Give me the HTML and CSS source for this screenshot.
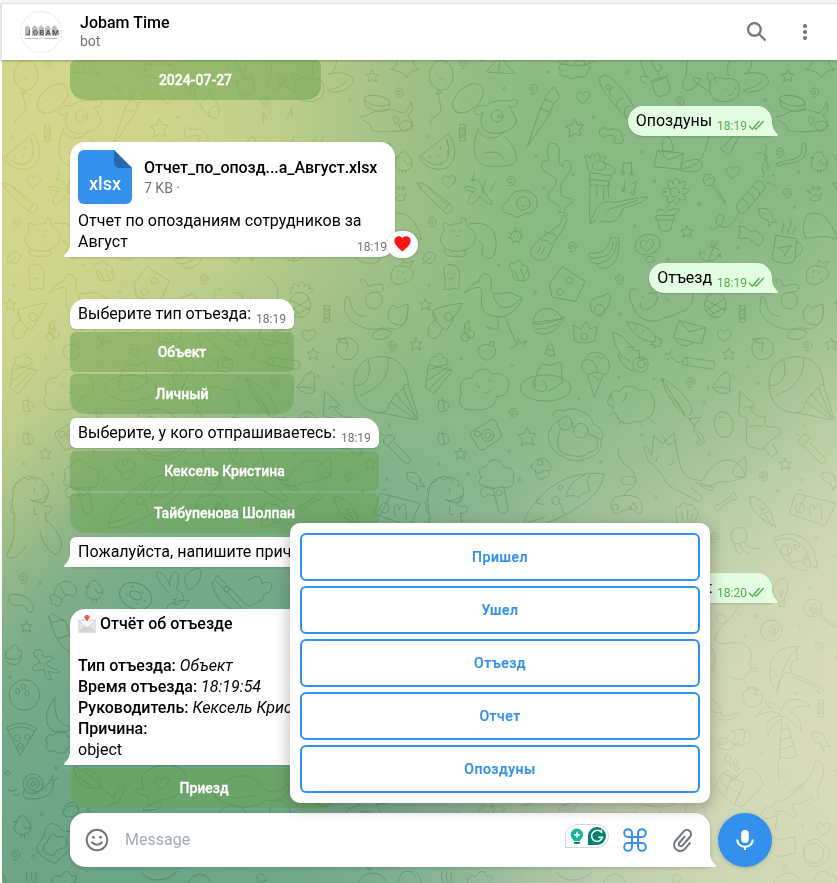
FILE: index.html
```html
<!DOCTYPE html>
<html lang="ru">
<head>
<meta charset="utf-8">
<title>Jobam Time</title>
<link rel="stylesheet" href="styles.css">
</head>
<body>
<svg class="defs" width="0" height="0" aria-hidden="true">
  <defs>
    <path id="star" d="M0-27 8-10 27-9 14 6 20 25 0 17-17 27-14 6-28-5-9-9Z"/>
    <path id="star-s" d="M0-18 5-6 18-5 9 4 13 17 0 10-12 17-9 4-18-5-5-6Z"/>
    <path id="heart" d="M-2 17C-14 8-24-2-19-12c5-9 15-7 18 1 4-9 15-11 20-3C25-3 9 10-2 17Z"/>
    <path id="swirl" d="M-2 2c-3-5 6-8 8-1 2 9-12 11-15 2-3-12 13-19 21-9 8 12-2 25-16 23"/>
    <path id="candy" d="M-8-14h16v28H-8zM-8-5 8-12M-8 5 8-4M-8 13 8 5M-6-14l-4-12 5 3 5-4 5 4 5-2-4 11M-6 14l-5 10 6-2 5 5 5-5 6 1-5-9"/>
    <path id="bone" d="M-22 10C-34 4-39 18-30 21c-1 11 14 9 12-2L20-8C30-1 38-11 29-18c1-11-14-12-14-1Z"/>
    <path id="cloud" d="M-60 62c-26-8-18-42-12-50-12-22 4-50 32-44 8-30 46-36 58-10 34-12 60 14 50 40-4 20-22 26-36 26 0 34-30 44-92 38Z"/>
    <path id="fish" d="M-24-22c22-6 40 6 40 26l14 16-15-2-8 14-4-20c-20-2-30-16-27-34ZM-12-9h1"/>
    <path id="chick" d="M-18-8c-4-24 28-28 30-6 16 4 18 40-12 42-26 2-32-24-20-34l-8-4 9-4M-6 28v8M4 28v9M2-2c0 12 12 14 18 8"/>
    <path id="pizza" d="M-48-24C-20-42 20-38 40-20L-8 60ZM-40-16C-16-32 14-26 32-12M-18-2a10 10 0 1 0 1 0M12-4a8 8 0 1 0 1 0M-8 24a8 8 0 1 0 1 0"/>
    <path id="drop" d="M-14-14C0-18 14-12 16 4 12 18 0 20-10 18-20 8-16-2-14-14ZM-4-22 2 16"/>
    <g id="tile">
      <ellipse cx="73" cy="226" rx="36" ry="45"/><path d="M58 218h1M84 216h1M66 234q8 8 14-2M65 272l-7 9 15-2ZM64 280c0 30 20 44-4 66-16 8-20 14-20 26"/>
      <path d="M208 215 250 170 293 221ZM250 170l-6 43M250 170l-60 12"/>
      <path d="M430 212c-14-16 10-24 18-18-4-22 26-20 28-6 10-16 32-8 26 8 20-6 22 14 8 20 4 14-14 20-26 12-14 12-30 8-34 0-12 4-28-4-20-16ZM424 186c20 12 80 18 108-4"/>
      <ellipse cx="153" cy="295" rx="54" ry="33" transform="rotate(-42 153 295)"/><path d="M135 300h1M155 276h1M150 310h1M175 278h1"/>
      <path d="M206 318c-24-8-40 16-32 24 12 6 22 0 24-6-20 50 14 66 42 64 30-4 58-16 58-40-2-10-18-34-22-42 28 14 30-26 14-20-14 12-52-8-84 20ZM186 385c-22 40-22 104 20 112 40 4 90 4 92-20 0-30-22-56-34-66M184 396c20 26 60 24 78-4M200 460c20-10 60-2 62 20"/><circle cx="240" cy="348" r="18"/><circle cx="246" cy="350" r="5"/>
      <path d="M332 438 370 325 400 338ZM370 325l14-26 26 10-10 29M384 299c2-26 20-22 26-40 20 26 22 40 0 50"/>
      <path d="M550 232c16-20 50 10 92 72 24 38 6 64-20 44-30-36-86-90-72-116ZM590 262c-16 6-14 22-6 30M616 294c-18 4-20 22-12 32M640 318c-18 2-20 16-16 30"/><circle cx="573" cy="262" r="7"/>
      <path d="M690 232c-26-50-22-60-4-60 14 4 20 20 46 64M694 232c-30-12-30 14-8 16M720 212c16 8 18-10 6-22M706 246l44-14 10 36c-8 20-36 30-46 12ZM700 244l52-18"/>
      <path d="M880 262c-12-26 20-36 44-24 26-8 46 4 42 30 6 34-54 50-80 24 0 0-12-16-6-30ZM880 250c-14-16-8-36-2-32 30 18 8 20 20 26M850 236c-20 50-60 40-52 10 20-30 4-50 18-80M934 226c-12-40 20-80 50-70 40 20 10 70-4 66 26-8 80-4 74 26-8 20-50 36-76 24 20-10 40-6 56-30M850 236q-36-10-14 12l40 26M926 262v6M956 262v6M934 284q10 6 14-6"/>
      <path d="M1168 208c14-4 18-22 20-36 20 12 28 8 46 0-2 20 8 30 18 38-22 0-30 10-38 24-8-18-28-22-46-26Z"/>
      <ellipse cx="1126" cy="302" rx="38" ry="15" transform="rotate(10 1126 302)"/><path d="M1088 298l4 22c40 20 60 16 70 8l2-16M1076 352c40-10 60-40 130-12 10-8 20-20 22-36 10 20 0 36-10 42 24 24 10 44-16 46-50 6-110 6-92-14l-28-20M1184 374l-12-18q8-14 12 0 8-8 8 4z"/><ellipse cx="1213" cy="378" rx="20" ry="15"/>
      <path d="M95 402c30 44 20 92-14 104-34 8-66-10-74-34ZM88 416c16 40 6 64-14 76-24 6-40-4-60-22M90 422v8M70 440v8M64 462v8M92 452v8M40 468v8M72 484v6"/>
      <path d="M548 392c2-14 22-8 24-2 30-10 46 10 44 22 8 8 2 22-12 18-14 6-16-12-8-16-8-14-26-8-30-2-12 2-22-8-18-20ZM786 366l-4-30q12 10 12 22M870 350l0-24-14 30"/>
      <path d="M740 460c-12-40 4-48 14-52 20 30 20 60-8 42M876 408c-10 40-20 90-70 96-30 8-10-24 20-24 24-8 34 10 28 24-20 20-60 8-70 4M722 452l78 8-10 48-78-8ZM722 452l32 28 46-20"/>
      <path d="M924 436l22-26M946 446l20-36M924 436c-16 0-16 16-2 18 4 14 22 10 24-8"/>
      <path d="M408 430c-30 0-10 40-14 52-30 0-30 26 10 44 40 26-20 46-10 68 14 20 44 16 34 40M408 430c40 4 0 60 30 70-4-30 30-20 24 4-10 36-32 30-30 60-10 30 20 30 32 32 14 16-26 20-22 34M440 646l-14 30c-30 20-90 60-86 84 12 30 50 20 50 12 20-32 18-50 46-80l14-32ZM422 638q20-8 30 10M380 690c10 20 30 0 40 20M362 710c10 20 30 0 40 24M370 740l-8 18M382 744l-8 18"/>
      <path d="M510 490c-14-30 0-26 10-14 0-16 12-16 14-6 14-18 16-8 14 8 20-20 22-8 10 8 20 10 44 16 36 32-20 16-40 4-50 2-24 4-36-10-34-30ZM518 520c4 50-4 110 2 152l16-10M584 528c-10 14-14 30-8 66M520 538l56 6 0 14-56-4ZM540 556v36M560 560v38M520 672c10-40 30-80 70-64l74-14 30-4-18 16-58 20c-20 50-40 40-66 38M570 630l90-28"/><ellipse cx="546" cy="497" rx="20" ry="14"/>
      <path d="M618 520v-30l26-2v34M618 524a6 5 0 1 0-1 0M644 526a6 5 0 1 0-1 0M620 572l4-30M650 580l8-36-14 8M620 575a6 6 0 1 0-1 0M648 584a6 6 0 1 0-1 0"/>
      <path d="M1044 432c16 10-10 26 8 38-16 10 14 26-4 42M1018 460c30-10 30 20 20 34-8 16 10 24 0 36M1078 492c24-16 60-6 74-30 6-30-2-34 14-30 6 50-20 56-66 60-10 6-22 12-22 0Z"/><use href="#chick" x="1208" y="484"/>
      <path d="M2 548l18 2 86 66c4 18-10 26-20 24L10 566ZM20 550l-10 16M98 610l-16 20M30 560l62 56M8 556h1"/>
      <path d="M160 540c20-10 40 20 40 34l28 38c-10 6-30-12-40-24-10 22-30 32-34 20 0-20 10-30 20-34-20 0-36-8-30-14 16-2 26 4 34 8M206 538q-12 30-8 44M172 514l-6 30M236 544l-16 32"/>
      <path d="M290 578c30-16 60 0 68 14 8 30-6 50-30 48-20 8-30 20-42 4-40-4-34-28-22-34 10-6 12-20 26-32Z"/><circle cx="319" cy="610" r="20"/><path d="M310 606h1M326 604h1M312 616q8 8 14-1"/>
      <circle cx="773" cy="577" r="14"/><path d="M760 566c-20-24 2-34 8-14 2-24 24-20 18 0 18-16 28-4 10 14 24-4 24 14 2 16 18 14 4 26-12 12 4 22-16 26-16 4-12 18-26 8-16-8-24 4-26-14-4-14-18-2-16-14 6-10ZM748 624l10-18M718 638q10-20 28 0 20-16 42-10-10 20-42 20M718 646h54v14h-54ZM722 660l6 28q16 12 34 0l6-28"/>
      <circle cx="876" cy="540" r="17"/><path d="M866 540q10-14 20 0M884 556l40 54M892 552l34 56"/>
      <path d="M1020 544c20-4 26 16 24 22l-60 72c-10 6-28-6-26-22ZM1006 560q20 4 22 24M990 578q20 4 22 24M974 598q20 4 22 24M966 636c-20 40-40 60-68 34-6-20 20-40 22-14 0 20-30 36-40 30M1050 548h10M1066 556h8M1052 528h1M1066 526h6"/>
      <path d="M1186 590c8-12 22-6 22 10-10 4-24 4-28-2ZM1172 572q8-8 8 8-8 2-8-8M1184 562q8-10 8 6-8 4-8-6M1202 562q8-8 6 8-10 4-6-8M1210 580q8-6 2 10"/>
      <use href="#fish" x="1050" y="648"/><path d="M1166 656c0-20 30-20 50-10 30 20 40 60 44 72-60-20-70 2-94-4-10-20-8-40 0-58ZM1180 650h1"/>
      <path d="M1078 706l62 10-8 68c-20 10-50 6-66-6ZM1138 726c30 2 18 48-4 44M1084 744l40-8-20 30-6-14ZM1098 700c-10-20 10-20 0-32M1116 702c-10-20 14-20 4-44M1130 704c-8-12 10-16 6-24"/>
      <path d="M966 680c20-6 30 14 32 14 20-4 30 0 42 20-6 20-14 26-20 22-6-14-16-10-26-22-20 0-22 6-32-2 8-10 8-20 4-32Z"/>
      <path d="M896 726l-22 56M888 722a10 9 0 1 0 14 4M876 738l30 10M848 756c-4 30 44 40 60 8M846 764l8-8 8 4M900 768l10-8v12"/>
      <path d="M580 714h26c0 50-4 80-40 90-20 4-30-8-24-14-20 2-30-14-16-16-20-8-10-20 0-14 40 2 50-24 54-46ZM588 724c0 30-10 50-62 50M598 724c0 40-20 60-56 68"/>
      <ellipse cx="692" cy="734" rx="38" ry="30" transform="rotate(-18 692 734)"/><use href="#heart" x="690" y="738"/><ellipse cx="699" cy="778" rx="13" ry="9"/>
      <circle cx="297" cy="709" r="16"/><path d="M280 700l-6-4M280 714h-6M290 724l-4 8M304 724l4 6M314 710h6M308 696l6-6M294 694v-8M290 708h1M302 712h1M298 700h1"/>
      <path d="M70 720c0-18 8-20 12-28-4-20-4-24 0-24 8 4 14 8 18 8 16-8 20-2 32-6 2-20 8-20 12-14 4 14 4 16 10 26 40 20 20 70-30 72-30 0-48-10-54-34ZM156 672c80-16 90 50 76 90-10 24-40 12-36-12 6-14-4-24-14-30M84 746c-8 20 20 28 36 22 30 10 30-14 22-20M104 690q6 8 10 0M126 692q8 6 12-2M118 708q8 6 14-4"/>
      <path d="M16 782c10-40 30-24 42-16-6 20-20 34-34 18M16 792l26-20"/>
      <path d="M80 806c10-20 46-18 48 20l-4 40c-8 6-14-6-20 0-6 6-14 0-24 2 12-20 0-44 0-62ZM92 820h1M108 822h1M96 836q8 6 14-2"/>
      <path d="M280 806c-10-14 8-24 14-14 4-16 24-10 20 4 20-4 26 18 12 22M284 810c4 40 20 30 40 32 20-10 10-30 6-34M292 812l14 28M312 806l10 30"/>
      <path d="M398 852 436 800l68 44-28 60-70-12ZM448 838q10-12 14-2 14 4 0 14l-10 2zM420 872q10-12 14-2 14 4 0 14l-10 2z"/>
      <path d="M186 844c0-28 36-32 38 4-10 40 10 34 36 32 20-8 30 4 56 14-10 30-40 60-76 56-50-6-48-30-46-64 4-14-4-20-6-24-20 0-30 8-46 18 14-20 26-28 44-36ZM230 886c10 50 50 46 80 10M242 952l2 38M264 952l36 84M208 980l36 10M220 990l-4-10M280 1048l20-16M300 1036l4-20 6 14 20-8-12 14"/>
      <path d="M1180 800c20-8 52 0 56 22-10 28-50 40-64 24-10-20 0-40 8-46ZM1200 800l6-20 10 10 20-8-12 18M1190 812v4M1206 818v4M1188 832v4M1210 836v4"/>
      <path d="M50 930c16-10 70-20 86-20l-46 80q-20-6-32-30ZM50 930q-10 20 8 30-30 10-24 50 30 20 42-26"/><circle cx="94" cy="950" r="12"/>
      <path d="M520 910c0-20 30-16 54-30 18 10-6 50-12 60-14 20-44 4-42-30Z"/><circle cx="548" cy="928" r="15"/>
      <path d="M348 966c2-44 60-60 88-10ZM346 970c30 10 80-10 96-20 4 10-10 22-16 16-6 16-16 6-22 14-14-4-14 14-26 4-14 8-30 0-30-8M350 992c20 20 60 8 80-18M380 944h1M396 936h1M412 944h1"/>
      <path d="M470 976l22 12 14-24 14 24 20-10-6 44c-20 8-40 8-60 2Z"/><circle cx="502" cy="1010" r="10"/>
      <path d="M660 868c-30-10-26 30-14 44 10 50 60 60 90 44 50-14 90-30 92-60 0-26 0-50-30-66M670 910c-4 30 40 20 48-6 10-20 0-30-20-24M676 890h1M712 886h1M746 892q0 16 14 8"/>
      <ellipse cx="895" cy="915" rx="32" ry="38"/><path d="M870 880c-10-10-8-20 4-14-6-20 10-20 16-6 6-24 20-16 18 0 14-16 24-8 12 8 16-6 20 6 4 12M866 900l58 30M870 930l54-34M880 944l44-20M868 916l30 36"/>
      <path d="M1030 910c-10 40 30 70 80 78 30 0 30-10 70 0 40-10 40-60 40-68M1030 910c0-30 10-26 16-2 10 34 20 40 44 40M1080 850c-10-20 10-20 20 10 20-10 40-8 44-4 6 24-10 20-20 18M1160 936c10-30 20-20 24-12l34-12c0 20 4 50-16 62-20 4-50-8-42-38ZM1112 1012q0-20 26-24 30 0 32 10-20 30-50 18Z"/><circle cx="1117" cy="902" r="25"/>
      <path d="M630 966c40 0 90 30 86 58-6 8-14 0-20 0-30-6-60-36-66-58ZM716 1010l20 8M710 1024l-10 10 12 0 2 10 8-8 8 4 0-10 6-4-12-8M660 980l-6 10M680 990l-6 10"/>
      <path d="M788 962l78 20-12 50-84-18ZM788 962l30 34 48-14M776 1020q20 30 50 10"/>
      <circle cx="1037" cy="1046" r="33"/><path d="M1008 1018c14-8 26 0 30 10-14 4-26-2-30-10ZM1036 1026q6 14-2 28"/>
      <circle cx="145" cy="1012" r="12"/><circle cx="160" cy="1003" r="12"/><path d="M142 1000q-4-30 16-38-6 16 2 28M144 970q-4 20 14 16"/>
      <path d="M186 1044c10-14 30-14 48 0 8 20-14 40-26 36-20-4-26-20-22-36ZM214 1038l6-12 10-2 0 14M204 1052h1M220 1050h1"/>
      <path d="M385 1062q10-40 16-30 8 4 12 34-14 6-28-4ZM390 1048l20 4"/>
      <path d="M36 1094l70 18-56 70-24-20ZM40 1108l54-16M34 1140l60-40M40 1164l62-60M40 1090c-4-20 10-24 14-16 8-24 26-10 22 0 16-4 22 10 10 14"/>
      <use href="#cloud" x="206" y="1166"/><path d="M180 1150q-4 10 8 12M216 1140q4 10 10 2M200 1176q12 8 20-4"/>
      <ellipse cx="386" cy="1164" rx="76" ry="39"/><path d="M356 1160c-6-30 6-46 14-58 2-20 20-4 24-6 20 2 34-20 40 0-4 20 6 40 0 50M350 1140c-8 24 10 36 26 34 20-4 14-20 0-34M390 1174q30-10 50-30"/>
      <path d="M512 1124l20 68 26-68M512 1124c-20-10-24-34-8-44 14-40 60-20 70 2 10 30-6 50-24 36-14 4-20-6-38 6ZM504 1080c20-6 40 14 36 36M540 1064q10 20 20 8M520 1120l24 20"/>
      <path d="M588 998c20 0 50 30 64 54l16 0-2 24 24 2M588 998c0 30 14 50 20 60l-4 10c10 20 20 40 48 46M630 1042l20-2M610 1066l30 18"/><circle cx="671" cy="1094" r="23"/><circle cx="673" cy="1092" r="12"/>
      <path d="M806 1072l86 12q4 20-6 24l-88-14q-4-14 8-22ZM808 1074q10 12 2 20M796 1084c-16 10-26-6-34-14M744 1062l14 0M748 1080l8-6M760 1058l2-10"/>
      <path d="M886 1160c20-10 20-50 50-40 10 20-6 40 6 50-10 20-50 8-56-10ZM890 1164q30-10 50 8M948 1124l4 10M874 1160l0 12M920 1120l8-8"/>
      <path d="M606 1174c14-20 46-20 60-2 20-10 44 10 40 20 14 16 4 60-14 60-10 20-40 10-48 16-20 10-46-10-44-24-20-4-10-20-12-24-20-4-20-20-8-32 0-16 16-20 26-14ZM628 1180q0 20-14 26M584 1184q-6 8 2 16M584 1240l-8 8M610 1264l-6 12M672 1270l6 8M690 1250l22 20M586 1202h1M604 1198h1"/>
      <path d="M734 1136c50 20 100 80 88 104-4 8-10 12-20 6-30-30-60-70-68-110ZM734 1136l70 108M760 1190q30 20 40 50M816 1256l36-4-20 24ZM818 1258l20 30c30 30 30 40 10 46-16 0-10-14-4-10 10 4 8-8-16-36"/>
      <ellipse cx="920" cy="1274" rx="28" ry="39" transform="rotate(-10 920 1274)"/><path d="M906 1252h14"/>
      <path d="M970 1174l44 40c-6 8-16 0-14 16 20 16 24 24 46 20-6 20 0 24 0 30 24 0 44 0 48 18-20 20-40 20-56 50-20 0-46-10-50-20l2-74c-20-4-20-10-24-10ZM1042 1344l20 26 20-10-16-30M980 1226q14-14 32 0M1000 1280q20-8 36 0"/>
      <path d="M1138 1238c-50 0-80-30-82-84 0-60 40-84 82-84 50 0 80 34 82 84M1138 1238c30 0 20-40 30-32 8-24 14-12 14-24 20-4 10-20 24-14 0-20 10-10 14-16M1100 1080c10 40 0 80-44 76M1160 1072c0 60-20 90-84 114M1138 1238l106 22M1168 1206l76 54M1182 1182l64 74M1206 1168l40 90M1220 1154l30 100"/>
      <use href="#drop" x="80" y="1216"/><use href="#drop" x="80" y="1315"/>
      <path d="M162 1296l60-36q10-6 14 4l18 40q0 10-8 14l-44 30q-12 6-18-4l-22-36q-4-8 0-12Z"/><circle cx="212" cy="1306" r="18"/><circle cx="212" cy="1306" r="9"/><circle cx="181" cy="1302" r="9"/>
      <path d="M410 1250c-8-24 20-20 34-18 10-14 80 0 84 40 40 20 30 40 24 50 8 40-40 60-80 60-50-8-80-44-78-76 4-20 16-36 30-44M430 1290c-20 50 0 70 20 74 40 10 60 4 66-10 30 10 30-40 20-46"/><circle cx="445" cy="1270" r="20"/><circle cx="491" cy="1292" r="22"/><path d="M512 1300l40 18M464 1276l6 8M484 1294h1M440 1272h1"/>
      <path d="M604 1348c-4 50 50 50 50 84 8 24-36 30-42 10 8-20 44-14 46-4 4 30-40 30-36 50M594 1492c30-10 50-6 66 0 20 10 20 50 6 50-14-8-14-14-26-14-16 2-26 4-36 14-20 0-34-30-10-50Z"/><circle cx="595" cy="1522" r="9"/><circle cx="650" cy="1512" r="4"/><circle cx="640" cy="1522" r="4"/><circle cx="658" cy="1524" r="4"/>
      <path d="M694 1384c-10-30-18-50-8-48 10 6 10 20 18 30l6-60 26 26 34-34 10 60c10 40 10 80 76 84 40-80 110-80 130-14-20 14-60 20-80 18-30 20-50 10-70 0M694 1384c40 20 50 80 90 88l64 34c10-4 10-14 4-18l-30-26M740 1310q4 20 14 26l26-18M726 1364q-10 14-8 20M772 1382q-6 14-16 14M850 1450l40 14c-4 16-20 4-40-8M986 1428c-30 10-44-4-36-20 10-24 30-30 34-38 6 30 4 40 2 58Z"/>
      <path d="M342 1402c6-30 50-40 60-2 0 16-16 14-22 10-20 20-24 8-38-8ZM356 1410c-4 20 10 34 26 24 20-6 14-20 10-24"/><circle cx="370" cy="1388" r="8"/>
      <path d="M192 1432c-10-14-4-34 14-30 10-30 44-30 54 0 20-4 38 16 28 30 8 20-10 40-30 28-30 8-40 4-52-2-24 0-24-10-14-26ZM228 1466l18 70c10 8 20 4 28-6l-14-70M230 1470c-20-16-50-4-36 10-4 10 10 18 18 2l20 6"/><circle cx="246" cy="1478" r="9"/>
      <path d="M40 1560c-6-40-14-60 0-100 10-30 50-40 80-20 30 24 24 50 0 70 0 10 14 10 26 8 14 10-10 30-16 20l4 30M36 1480c-10-10-4-20 4-20 0-16 10-16 16-14 4-18 20-14 22-6 14-10 20-4 26 4M32 1500c-12 0-8 20 0 20-10 4-4 20 2 20M86 1500q20 10 50-14l-6 20q-20 8-44-6ZM98 1466v10M124 1452v8M98 1520v24h10M34 1556c10 40 0 80-20 110 10 20 40 4 60-30M135 1560c40 40 60 80 30 104-20 0-50-50-50-70"/>
      <path d="M560 1422c-80-10-150 20-200 80-30 30-40 60-40 80l36 0 70-28c80-40 130-80 134-132ZM520 1424c-20 24 0 30-4 50-20 10-24 4-30 20-16-10-20-8-40-4 8-26 20-50 60-66M360 1500l0 10 20 4M440 1540l-10-30M326 1570l60-20"/><circle cx="416" cy="1502" r="12"/><circle cx="430" cy="1462" r="7"/>
      <path d="M780 1556c-10-40 0-40 8-34 6-20 20-14 22-6 20-8 24 4 22 12 20 4 8 20 0 40-20 0-30 14-50 10ZM794 1536l4 26M812 1530v30M828 1540l-8 24"/>
      <path d="M998 1490c20-6 60 30 66 54M998 1490c0 30 20 60 44 70M1030 1544l30-10 16 50M1042 1560l34 20M1046 1546l20 34M1038 1560l16 14"/><circle cx="1036" cy="1528" r="5"/>
      <path d="M1136 1480l120 30-32 68-106-36ZM1166 1486l-30 60M1180 1550c-10-40 14-50 12-20 20-40 20-10 22 30M1140 1514q-12 14 2 24 20 4 20-20-10-16-22-4M1142 1470h10"/>
      <path d="M1144 1320l16-16q14 0 20 10l-24 26q-12-8-12-20ZM1180 1330l48 48c-4 14-14 14-22 8l-46-48M1136 1300l10 6M1162 1270v10"/><use href="#fish" x="1240" y="1440"/>
      <path d="M944 1620c-6-30 8-40 20-36 20-10 30 20 24 36-10 10-30 20-44 0ZM950 1630c10 14 0 26 20 30M966 1630c10 14 10 26 30 30M980 1624c10 14 20 24 50 22"/>
      <path d="M1070 1616c70-40 130 10 130 90l-20-10c-10 30-50 10-60 0-20-20-34-40-50-80ZM1080 1620c60-20 96 30 100 76M1110 1640l10 50 30-8 20 20M1130 1634l6 14 12-10ZM1160 1672l2 16 10-12Z"/><circle cx="1108" cy="1650" r="16"/>
      <path d="M24 1786c20-8 66 0 72 40-4 20-24 8-20 0-14-16-26-10-32-10-14 6-30-16-20-30Z"/><path d="M150 1800c-12-10 0-20 8-14-4-20 20-50 44-40 30 10 24 40 10 46-10-16-26-4-30 4 0 20-20 30-22 16-10 4-14-2-10-12ZM160 1786l20 12M176 1760l14 24"/>
      <use href="#chick" x="280" y="1770"/><ellipse cx="402" cy="1788" rx="50" ry="38" transform="rotate(25 402 1788)"/><ellipse cx="402" cy="1786" rx="20" ry="12" transform="rotate(25 402 1786)"/><path d="M372 1780l6 6M390 1760h6M420 1776l6 4M402 1812l8-2M430 1800v6"/>
      <path d="M500 1780c-30-40-44-60-30-66 20 10 34 34 34 46 0-40 16-50 24-40 10 20-6 40-2 50 40 20 10 50-8 44l4-20M508 1788h1M526 1782h1M512 1798q10 4 12-4M500 1840c-10-20 0-30 14-30 20-10 34-10 48-8-14 20-20 20-20 40M560 1770c-30-50 10-60 30-66 20 20 0 50-26 66Z"/>
      <path d="M632 1750l14-24 80 82 20 12 30-20M632 1750c0 20 30 80 76 80M644 1744l80 84M740 1740c30-20 40-8 40 10 30-10 40 10 20 28-20 0-10 20-24 30M706 1730h1"/><circle cx="674" cy="1768" r="8"/>
      <path d="M142 1850l10-10 40 26c14 40 30 90 10 90-30-20-50-60-60-106ZM146 1868l40-10M170 1916l40-14M142 1850l6 16"/>
      <path d="M12 1966c0-20 12-14 16-22 4-16 24-6 20 6 20 0 10 14 10 18 0 30-20 30-40 20-8-10-8-10-6-22ZM12 1972q24 14 46-2"/>
      <path d="M100 1970c-16-20 20-32 24-8 2 20 30-2 30 10-4 16-16 10-20 16 4 20 44 20 40 28-20 8-30-6-34-2 6 20 14 20 10 24-20 4-20-20-24-30-14 0-20 10-34 0-2-14 16-16 20-18 0-14 0-8-12-20ZM106 1966h1M118 1966h1M118 1990h1M126 1996h1"/>
      <circle cx="68" cy="2085" r="46"/><ellipse cx="48" cy="2074" rx="6" ry="9"/><ellipse cx="66" cy="2060" rx="6" ry="8"/><ellipse cx="76" cy="2080" rx="6" ry="9"/>
      <path d="M160 2092c-40 50-30 100 10 106 20 0 40-10 46-20-50 8-60-40-56-86ZM170 2130h1M180 2160h1"/><use href="#pizza" x="64" y="2206"/>
      <path d="M136 2230c-10-20 10-30 20-24 10-20 40-16 40 4 20 0 20 30 0 34 0 20-30 20-34 8-20 8-34-4-26-22Z"/>
      <circle cx="94" cy="2352" r="30"/><circle cx="94" cy="2352" r="18"/><circle cx="94" cy="2352" r="7"/><path d="M68 2370c-10 20 0 24 10 26 40 4 80-10 76-44 8-20-10-16-10-6-20 20-30 30-50 30M150 2340l4-16M160 2342l8-10M20 2370q14 8 26-2M36 2384q10 6 20-2"/>
      <path d="M220 2320c-10-24 4-24 14-8 30-20 70 20 60 50-40 10-64-8-74-42ZM296 2360l40 34M336 2394c10-30 30-50 34-30-10 30-24 50-30 44M320 2416l30-10M230 2330l40 30M250 2316l40 30"/>
      <path d="M420 2330c30-40 100-50 130-10 10 40-20 80-80 80l-30 20 0-30c-20-10-50-10-38-20l24-4q-10-20-6-36Z"/><use href="#heart" x="480" y="2350"/><path d="M640 2390c20-80 120-80 150-20 30 10 60 0 66-20 20 30-30 60-60 50-50 30-100 30-156-10ZM660 2380c40 30 80 0 100 10"/>
      <path d="M882 1732c10-20 30-10 24-4M880 1936c20 30 16 60 2 80M1076 1750c10-24 30-16 36 0 4 20-10 30-10 50l-20 6c-10-20-20-40-6-56ZM1084 1806l4 14 14-2 0-16M1088 1770l4 24 10-26"/>
      <circle cx="1188" cy="1824" r="27"/><use href="#swirl" x="1188" y="1824"/><path d="M1210 1844l50 34M1206 1850l50 34"/>
      <circle cx="1063" cy="1892" r="32"/><circle cx="1071" cy="1890" r="15"/><circle cx="1071" cy="1887" r="4"/><circle cx="1071" cy="1896" r="5"/>
      <path d="M960 1820c-4 20-20 40-40 50-24 4-34-30-4-26 20 10 12 24-6 40-20 30-24 50 20 46 60-10 80 20 70 50-10 40 30 40 22 30-10-20-30 10-40 24-10 8-36 4-48-8"/>
      <path d="M1144 1940c-50-4-90 30-84 70 10 0 20 10 20 20M1144 1940c-6 10-10 30 0 40-20-4-30 20-20 40-20-10-40 10-42 54-20-20-28-44-22-64M1144 1940c-40 40-50 80-62 134M1124 2028l80 36c10 4 0 14-10 8M1126 2020l84 38c20 10 0 34-10 16"/>
      <circle cx="1007" cy="2092" r="30"/><path d="M986 2072l12-2-8-10 12 6 6-8 2 12 14-2-10 8 8 10-18-6"/>
      <path d="M1094 2150c-10-20-50-20-76 0 20-30 30-30 50-24-20-10-30-20-24-20 20-4 40 14 50 28 0-50 70-40 86-14-30-6-50 0-60 16 30 10 30 30 32 56-20-20-30-30-50-44-20 20-40 24-48 56-20-30 10-60 40-54ZM1094 2158l-6 110q20 16 50 0l-28-100M1092 2190l24-8M1090 2220l34-10M1088 2250l44-14M1090 2270l-8 24M1084 2300l2 40"/>
      <path d="M904 2230c0-20 20-20 24-10 10-30 50-44 70-20 10 20-4 34-16 32-10 10-30 4-40-6 10 20 30 4 20 0M904 2230q10 10 26-4c20-10 20 10 30 6-20 24-60 20-56-2ZM940 2190q20 8 14 30M976 2184q14 14 2 40"/>
      <use href="#fish" x="1210" y="2220"/><path d="M880 2130c30 20 40-4 30 10 4 24 60-10 56-2-8 24-40 24-60 20M876 2090c20 20 30 20 34 40"/>
      <path d="M916 2320l-24 40 60 54 30-64ZM982 2350l-30 64 22 8 64-66c-4-30-30-60-50-50l-50 40M940 2340l-14 40M916 2352l54 28"/><circle cx="932" cy="2320" r="8"/><circle cx="950" cy="2332" r="8"/><circle cx="944" cy="2294" r="7"/><circle cx="960" cy="2306" r="7"/><ellipse cx="932" cy="2276" rx="8" ry="12"/><ellipse cx="956" cy="2286" rx="7" ry="8"/>
      <path d="M1032 2446c0-20 20-24 40-30 0-20 10-20 20-8 40-30 90-60 104-124 20-6 30 20 20 50-10 20-20 40-10 50-4 30-20 20-22 4-30 30-40 20-60 26 10 20 20 30 10 40-20-4-20-20-40-20-20 20-54 30-62 12ZM1074 2436l16-4M1070 2424h1M1140 2360l20-8M1120 2376l40-20"/>
      <path d="M1046 2500l44 20 44-10v50l-50 10-40-20M1080 2450c0 20-10 30 0 44"/><circle cx="1190" cy="2560" r="30"/><path d="M1160 2570c-10-50 40-70 60-34 30 10 20 50-6 54-20 20-50 10-54-20Z"/>
      <use href="#chick" x="64" y="2476"/><path d="M106 2540c10-20 24-30 24-50 10-30 40-20 50 0 20 10 60-4 56 30l-76 70c-20-4-60-30-54-50ZM126 2536c20-10 10-30 30-34 20 20 40-4 38 20 10 30-40 20-36 44-20 0-40-10-32-30Z"/><ellipse cx="208" cy="2434" rx="24" ry="16" transform="rotate(-20 208 2434)"/><path d="M200 2430h1M214 2436h1M220 2424h1"/><path d="M424 2430c10-20 20-10 40-26 20 0 20 20 0 24ZM652 2440c20-40 70-30 80 0M806 2440c-10-60 60-40 60 0M180 2430c20-30 50-30 50-6"/>
      <path d="M76 2616c-6 20 0 30 12 34M90 2616c-6 20 0 30 12 34M104 2618c-6 20 0 30 12 34M150 2640c10-24 20-10 26-10 10-20 30-20 34 0 10-8 20 0 10 14-30 16-70 14-70-4ZM420 2618c20 30 76 30 106-4M560 2652c10-40 60-40 66 0M584 2630h1M602 2630h1M764 2630c10-20 30 0 30 10l-20 8ZM1070 2650c10-40 70-40 80-8M1190 2650c0-50 50-40 50-20M0 2620q20 20 8 40"/>
      <use href="#swirl" x="137" y="190"/><use href="#swirl" x="346" y="264"/><use href="#swirl" x="786" y="301"/><use href="#swirl" x="1190" y="275"/><use href="#swirl" x="280" y="540"/><use href="#swirl" x="1108" y="577"/><use href="#swirl" x="463" y="738"/><use href="#swirl" x="605" y="835"/><use href="#swirl" x="1086" y="455"/><use href="#swirl" x="43" y="663"/><use href="#swirl" x="1170" y="1035"/><use href="#swirl" x="817" y="1145"/><use href="#swirl" x="286" y="1236"/><use href="#swirl" x="1037" y="1426"/><use href="#swirl" x="890" y="1610"/><use href="#swirl" x="62" y="1732"/><use href="#swirl" x="1205" y="1937"/><use href="#swirl" x="40" y="2562"/>
      <use href="#star" x="473" y="384"/><use href="#star-s" x="1112" y="228"/><use href="#star-s" x="810" y="695"/><use href="#star" x="330" y="1310"/><use href="#star-s" x="25" y="914"/><use href="#star-s" x="935" y="1062"/><use href="#star-s" x="1243" y="1032"/><use href="#star-s" x="131" y="1361"/><use href="#star-s" x="1105" y="1392"/><use href="#star-s" x="74" y="1880"/>
      <use href="#heart" x="498" y="294"/><use href="#heart" x="96" y="546"/><use href="#heart" x="948" y="518"/><use href="#heart" x="922" y="1008"/><use href="#heart" x="1220" y="2488"/>
      <use href="#candy" x="137" y="398"/><use href="#candy" x="976" y="942"/><use href="#candy" x="1212" y="2126"/><use href="#bone" x="927" y="1505"/>
      <path d="M262 262a4 4 0 1 0 1 0M391 212a4 4 0 1 0 1 0M630 214a4 4 0 1 0 1 0M1044 296a4 4 0 1 0 1 0M30 406a4 4 0 1 0 1 0M356 466a4 4 0 1 0 1 0M528 348a4 4 0 1 0 1 0M468 520a4 4 0 1 0 1 0M674 452a4 4 0 1 0 1 0M712 540a4 4 0 1 0 1 0M380 558a4 4 0 1 0 1 0M846 608a4 4 0 1 0 1 0M652 674a4 4 0 1 0 1 0M752 774a4 4 0 1 0 1 0M964 740a4 4 0 1 0 1 0M1144 512a4 4 0 1 0 1 0M1132 618a4 4 0 1 0 1 0M244 792a4 4 0 1 0 1 0M36 852a4 4 0 1 0 1 0M354 874a4 4 0 1 0 1 0M610 938a4 4 0 1 0 1 0M132 1072a4 4 0 1 0 1 0M284 1092a4 4 0 1 0 1 0M606 1128a4 4 0 1 0 1 0M710 1132a4 4 0 1 0 1 0M486 1192a4 4 0 1 0 1 0M862 1204a4 4 0 1 0 1 0M994 1096a4 4 0 1 0 1 0M1022 1146a4 4 0 1 0 1 0M674 1302a4 4 0 1 0 1 0M276 1350a4 4 0 1 0 1 0M552 1382a4 4 0 1 0 1 0M66 1388a4 4 0 1 0 1 0M152 1418a4 4 0 1 0 1 0M310 1434a6 6 0 1 0 1 0M876 1358a5 5 0 1 0 1 0M716 1486a5 5 0 1 0 1 0M1082 1468a4 4 0 1 0 1 0M1154 1434a4 4 0 1 0 1 0M1200 1608a4 4 0 1 0 1 0M114 1744a5 5 0 1 0 1 0M1178 1758a4 4 0 1 0 1 0M1014 1844a4 4 0 1 0 1 0M1146 1876a4 4 0 1 0 1 0M984 1904a4 4 0 1 0 1 0M1138 2076a4 4 0 1 0 1 0M1036 2254a4 4 0 1 0 1 0M162 2300a5 5 0 1 0 1 0M18 2312a7 7 0 1 0 1 0M120 2438a5 5 0 1 0 1 0M260 2424a5 5 0 1 0 1 0M94 2564a5 5 0 1 0 1 0M1102 2594a7 7 0 1 0 1 0M1156 2474a4 4 0 1 0 1 0M24 2026a4 4 0 1 0 1 0"/>
    </g>
    <symbol id="tail" viewBox="0 0 9 18"><path d="M6 17H0V0c.193 2.84.876 5.767 2.05 8.782.904 2.325 2.446 4.485 4.625 6.48A1 1 0 0 1 6 17z"/></symbol>
    <symbol id="checks" viewBox="0 0 17 11"><path d="M.8 5.600 4.300 9.200 11.500 1M8 9.200 15.800 1M6.800 8l1.200 1.200" fill="none" stroke="currentColor" stroke-width="1.300"/></symbol>
  </defs>
</svg>

<div class="app">
  <header class="header">
    <svg class="avatar" viewBox="0 0 42 42">
      <circle cx="21" cy="21" r="20.5" fill="#fff" stroke="#b9dafa" stroke-width=".8" stroke-dasharray="2.2 1.6"/>
      <g fill="#bdbdbf"><path d="M5 25v-8q2.500-5 5 0v8zM12 25v-8q2.500-5 5.500 0v8zM18.500 25v-8q2.700-5 5.500 0v8zM25 25v-8q2.700-5 5.500 0v8zM31.800 25v-8q2.700-5 5.300 0v8z"/></g>
      <g class="avatar-text"><text x="6" y="24">J</text><text x="12.700" y="24">O</text><text x="19.200" y="24">B</text><text x="25.600" y="24">A</text><text x="32" y="24">M</text></g>
      <path d="M5 27.500h13M24 27.500h13" stroke="#aaa" stroke-width=".8"/><path d="M19 27h4" stroke="#ccc" stroke-width="1"/>
    </svg>
    <div class="peer"><div class="peer-name">Jobam Time</div><div class="peer-status">bot</div></div>
    <svg class="search" viewBox="0 0 24 24"><circle cx="9.400" cy="9.400" r="6.300"/><path d="m14 14 6.500 6.500"/></svg>
    <svg class="more" viewBox="0 0 24 24"><circle cx="12" cy="6" r="2.100"/><circle cx="12" cy="12" r="2.100"/><circle cx="12" cy="18" r="2.100"/></svg>
  </header>

  <main class="chat">
    <canvas class="gradient" width="50" height="50"></canvas>
    <svg class="pattern" width="835" height="823" viewBox="2 60 835 823">
      <g transform="translate(1.700 0) scale(.33333)"><use href="#tile"/></g>
      <g transform="translate(417 0) scale(.33333)"><use href="#tile"/></g>
      <g transform="translate(832.300 0) scale(.33333)"><use href="#tile"/></g>
    </svg>

    <div class="messages">
      <div class="keyboard w-date"><div class="key last">2024-07-27</div></div>
      <div class="bubble out">Опоздуны<span class="time">18:19<svg class="checks"><use href="#checks"/></svg></span><svg class="tail"><use href="#tail"/></svg></div>
      <div class="bubble in doc">
        <div class="file">
          <svg class="file-icon" viewBox="0 0 54 54"><path d="M6 0h30l18 18v30a6 6 0 0 1-6 6H6a6 6 0 0 1-6-6V6a6 6 0 0 1 6-6z" fill="#3390ec"/><path d="M36 0l18 18H41a5 5 0 0 1-5-5z" fill="#2468ad"/><text x="27" y="40" text-anchor="middle">xlsx</text></svg>
          <div class="file-info"><div class="file-name">Отчет_по_опозд...а_Август.xlsx</div><div class="file-size">7 KB ·</div></div>
        </div>
        <div class="caption">Отчет по опозданиям сотрудников за Август</div>
        <span class="time corner">18:19</span>
        <span class="reaction"><svg viewBox="0 0 20 20"><path d="M10 18.500C5 14 1 10.500 1.500 6.500 2 2 7.500 1 10 4.500c2.500-3.500 8-2.500 8.500 2C19 10.500 15 14 10 18.500Z" fill="#fb1413"/></svg></span>
        <svg class="tail"><use href="#tail"/></svg>
      </div>
      <div class="bubble out">Отъезд<span class="time">18:19<svg class="checks"><use href="#checks"/></svg></span><svg class="tail"><use href="#tail"/></svg></div>
      <div class="bubble in first w-type">Выберите тип отъезда:<span class="time">18:19</span></div>
      <div class="keyboard w-type"><div class="key">Объект</div><div class="key last">Личный</div></div>
      <div class="bubble in mid w-who">Выберите, у кого отпрашиваетесь:<span class="time">18:19</span></div>
      <div class="keyboard w-who"><div class="key">Кексель Кристина</div><div class="key last">Тайбупенова Шолпан</div></div>
      <div class="bubble in end w-reason">Пожалуйста, напишите причину:<span class="time">18:19</span><svg class="tail"><use href="#tail"/></svg></div>
      <div class="bubble out">object<span class="time">18:20<svg class="checks"><use href="#checks"/></svg></span><svg class="tail"><use href="#tail"/></svg></div>
      <div class="bubble in report w-report">
        <div><svg class="emoji" viewBox="0 0 18 18"><path d="M0 5h18v12.500H0z" fill="#e4e4e4"/><path d="M0 17.500 7 10h4l7 7.500z" fill="#d3d3d3"/><path d="M0 5h18l-8 7.500q-1 .8-2 0z" fill="#f3f3f3" stroke="#bbb" stroke-width=".5"/><path d="M7.500 0h3v1.500h1.800L9 6.500 5.700 1.500h1.800z" fill="#f0514a"/></svg><b>Отчёт об отъезде</b></div>
        <div>&nbsp;</div>
        <div><b>Тип отъезда:</b> <i>Объект</i></div>
        <div><b>Время отъезда:</b> <i>18:19:54</i></div>
        <div><b>Руководитель:</b> <i>Кексель Кристина</i></div>
        <div><b>Причина:</b></div>
        <div>object</div>
        <svg class="tail"><use href="#tail"/></svg>
      </div>
      <div class="keyboard w-report"><div class="key last">Приезд</div></div>
    </div>

    <div class="composer">
      <div class="input">
        <svg class="icon smile" viewBox="0 0 24 24"><circle cx="12" cy="12" r="9.500"/><path d="M6.900 13.800q5.100 5 10.200 0"/><circle class="dot" cx="8.700" cy="9.500" r="1.300"/><circle class="dot" cx="15.300" cy="9.500" r="1.300"/></svg>
        <span class="placeholder">Message</span>
        <svg class="assist" viewBox="0 0 44 24">
          <path d="M.5 23.500V12A11.500 11.500 0 0 1 12 .5h20a11.500 11.500 0 0 1 0 23z" fill="#fff" stroke="#d5d6e3"/>
          <path d="M8.700 17c0-1.600-3-3-3-6.200a6.200 6.200 0 0 1 12.400 0c0 3.200-3 4.600-3 6.200z" fill="#13b89a"/><path d="M9 18h6v1.300q-3 1.500-6 0z" fill="#02735f"/><path d="m12 7 1.100 2.700 2.700 1.100-2.700 1.100L12 14.600l-1.100-2.700-2.700-1.100 2.700-1.100z" fill="#fff"/>
          <path d="M23 21v-9a9 9 0 1 1 9 9z" fill="#02806d"/><path d="M36 8a5.500 5.500 0 1 0 1.400 5.300h-4M36.500 5.500V9" fill="none" stroke="#fff" stroke-width="1.500"/>
        </svg>
        <svg class="icon command" viewBox="0 0 24 24"><path d="M9.200 5.600a3.600 3.600 0 1 0-3.600 3.600h12.800A3.600 3.600 0 1 0 14.800 5.600v12.800a3.600 3.600 0 1 0 3.600-3.600H5.600A3.600 3.600 0 1 0 9.200 18.400z"/></svg>
        <svg class="icon clip" viewBox="0 0 24 24"><path d="m13.900 8.400-5.300 6.300a1.900 1.900 0 0 0 2.900 2.500l7-8.200a3.800 3.800 0 0 0-5.800-5L5.100 12.700a5.700 5.700 0 0 0 8.700 7.400l5-5.900"/></svg>
        <svg class="tail"><use href="#tail"/></svg>
      </div>
      <div class="mic"><svg viewBox="0 0 24 24"><rect x="8.200" y="2" width="7.600" height="13" rx="3.800" fill="#fff"/><path d="M4.200 11.500a7.800 7.300 0 0 0 15.600 0M12 19v3" fill="none" stroke="#fff" stroke-width="2"/></svg></div>
    </div>

    <div class="menu">
      <div class="option">Пришел</div>
      <div class="option">Ушел</div>
      <div class="option">Отъезд</div>
      <div class="option">Отчет</div>
      <div class="option">Опоздуны</div>
    </div>
  </main>
</div>
<script src="gradient.js"></script>
</body>
</html>
```
FILE: styles.css
```css
* { box-sizing: border-box; }
body {
  margin: 0;
  background: #fff;
  font: 16px/21px Roboto, "Liberation Sans", sans-serif;
  color: #000;
  overflow: hidden;
}
.defs { display: block; position: absolute; }
.app {
  width: 837px;
  height: 883px;
  display: flex;
  flex-direction: column;
  border-top: 3px solid #f5f5f5;
}
.header {
  position: relative;
  z-index: 2;
  height: 57px;
  margin-left: 1px;
  padding: 0 20px 0 19px;
  display: flex;
  align-items: center;
  background: #fff;
  border-top: 1px solid #e3e4e6;
  border-left: 1px solid #dfe1e5;
  box-shadow: 0 1px 2px rgba(60, 80, 50, .4);
}
.avatar { width: 42px; height: 42px; margin-left: -1px; }
.avatar-text { font: 700 8px Roboto, sans-serif; fill: #55565a; }
.peer { flex: 1; margin-left: 18px; }
.peer-name { font-weight: 500; line-height: 20px; }
.peer-status { font-size: 14px; line-height: 18px; color: #707579; margin-top: -1px; padding-bottom: 1px; }
.search, .more { width: 24px; height: 24px; }
.search { fill: none; stroke: #707579; stroke-width: 2.200; margin-right: 24px; }
.more { fill: #707579; }
.chat {
  position: relative;
  flex: 1;
  margin-left: 2px;
  overflow: hidden;
}
.gradient { position: absolute; left: 0; top: -56px; width: 835px; height: 879px; }
.pattern {
  position: absolute;
  inset: 0;
  fill: none;
  stroke: #000;
  stroke-width: 2.800;
  stroke-linecap: round;
  stroke-linejoin: round;
  opacity: .5;
  mix-blend-mode: soft-light;
}
.messages {
  position: relative;
  display: flex;
  flex-direction: column;
  align-items: flex-start;
  width: 702px;
  margin-left: 68px;
}
.bubble {
  position: relative;
  height: 30px;
  padding: 4px 8px 5px;
  background: #fff;
  border-radius: 15px;
  box-shadow: 0 1px 2px rgba(16, 35, 47, .18);
  white-space: nowrap;
}
.out {
  align-self: flex-end;
  margin: 6px 0;
  background: #e3fee0;
  border-bottom-right-radius: 0;
}
.time {
  display: inline-block;
  margin-left: 5px;
  font-size: 12px;
  line-height: 14px;
  color: #707579;
  transform: translateY(4px);
}
.out .time { color: #4fae4e; }
.checks { width: 17px; height: 11px; margin: 0 -1px -1px 1px; }
.tail {
  position: absolute;
  bottom: -1px;
  width: 9px;
  height: 18px;
  fill: #fff;
}
.in .tail { left: -8px; transform: scaleX(-1); }
.out .tail { right: -8px; fill: #e3fee0; }
.doc {
  width: 325px;
  height: 115px;
  padding: 8px;
  border-bottom-left-radius: 0;
  white-space: normal;
}
.file { display: flex; gap: 12px; height: 54px; }
.file-icon { width: 54px; height: 54px; }
.file-icon text { font: 500 18px Roboto, sans-serif; fill: #fff; }
.file-info { padding-top: 7px; white-space: nowrap; }
.file-name { font-weight: 500; letter-spacing: -.04px; }
.file-size { font-size: 14px; line-height: 20px; color: #707579; }
.caption { margin-top: 6px; }
.corner { position: absolute; right: 8px; bottom: 7px; }
.reaction {
  position: absolute;
  right: -23px;
  bottom: -1px;
  width: 31px;
  height: 27px;
  padding: 3px 6px;
  border-radius: 14px;
  background: #fff;
  box-shadow: 0 0 3px rgba(16, 35, 47, .25);
}
.reaction svg { display: block; width: 19px; height: 19px; }
.first { border-radius: 15px 15px 6px 6px; }
.mid { border-radius: 6px 15px 6px 6px; margin-top: 4px; }
.end { border-radius: 6px 15px 15px 0; margin-top: 4px; }
.report { height: 156px; border-radius: 15px 15px 6px 0; }
.w-date { width: 251px; }
.w-type { width: 224px; }
.w-who { width: 309px; }
.w-report { width: 268px; }
.keyboard { display: flex; flex-direction: column; gap: 2px; }
.bubble + .keyboard { margin-top: 3px; }
.key {
  height: 40px;
  border-radius: 6px;
  background: rgba(104, 162, 78, .5);
  color: #fff;
  font-weight: 500;
  font-size: 14px;
  line-height: 40px;
  text-align: center;
  -webkit-text-stroke: .3px #fff;
}
.key.last { border-radius: 6px 6px 15px 15px; }
b { font-weight: 500; }
.emoji { width: 18px; height: 18px; margin-right: 4px; vertical-align: -4px; }
.composer {
  position: relative;
  display: flex;
  gap: 8px;
  margin: 5px 0 0 68px;
}
.input {
  position: relative;
  display: flex;
  align-items: center;
  width: 640px;
  height: 54px;
  padding: 0 14px;
  background: #fff;
  border-radius: 15px 15px 0 15px;
  box-shadow: 0 1px 4px rgba(16, 35, 47, .2);
}
.input .tail { right: -8px; }
.icon { width: 26px; height: 26px; fill: none; stroke: #707579; stroke-width: 1.800; }
.icon .dot { fill: #707579; stroke: none; }
.placeholder { flex: 1; margin: -2px 0 0 15px; color: #a2acb4; }
.assist { width: 44px; height: 24px; margin: -9px 13px 0 0; }
.command { stroke: #3390ec; }
.clip { margin: 0 0 0 22px; }
.mic {
  width: 54px;
  height: 54px;
  display: grid;
  place-items: center;
  border-radius: 50%;
  background: #3390ec;
  box-shadow: 0 1px 4px rgba(16, 35, 47, .2);
}
.mic svg { width: 24px; height: 24px; }
.menu {
  position: absolute;
  left: 288px;
  top: 463px;
  width: 420px;
  padding: 10px;
  display: flex;
  flex-direction: column;
  gap: 5px;
  border-radius: 10px;
  background: #fff;
  box-shadow: 0 4px 16px rgba(60, 60, 60, .4);
}
.option {
  height: 48px;
  border: 2px solid #3390ec;
  border-radius: 6px;
  color: #3390ec;
  font-weight: 500;
  font-size: 14px;
  letter-spacing: .5px;
  line-height: 44px;
  text-align: center;
  -webkit-text-stroke: .2px #3390ec;
}
```
FILE: gradient.js
```js
// Four-point gradient with a swirl, rendered small and stretched by CSS.
const canvas = document.querySelector('.gradient');
const ctx = canvas.getContext('2d');
const size = 50;
const points = [
  { x: 0.80, y: 0.90, c: [219, 221, 187] },
  { x: 0.35, y: 0.75, c: [107, 165, 135] },
  { x: 0.20, y: 0.10, c: [213, 216, 141] },
  { x: 0.65, y: 0.25, c: [136, 184, 132] }
];
const image = ctx.createImageData(size, size);
const clamp = v => Math.max(0, Math.min(1, v));
for (let y = 0; y < size; y++) {
  for (let x = 0; x < size; x++) {
    const dx = x / size - 0.5;
    const dy = y / size - 0.5;
    const swirl = 0.35 * Math.hypot(dx, dy);
    const theta = swirl * swirl * 6.4;
    const s = Math.sin(theta);
    const c = Math.cos(theta);
    const px = clamp(0.5 + dx * c - dy * s);
    const py = clamp(0.5 + dx * s + dy * c);
    let sum = 0;
    const rgb = [0, 0, 0];
    for (const p of points) {
      const d = Math.pow(Math.max(0, 0.9 - Math.hypot(px - p.x, py - p.y)), 4);
      sum += d;
      for (let i = 0; i < 3; i++) rgb[i] += d * p.c[i];
    }
    const o = (y * size + x) * 4;
    for (let i = 0; i < 3; i++) image.data[o + i] = rgb[i] / sum;
    image.data[o + 3] = 255;
  }
}
ctx.putImageData(image, 0, 0);
```
